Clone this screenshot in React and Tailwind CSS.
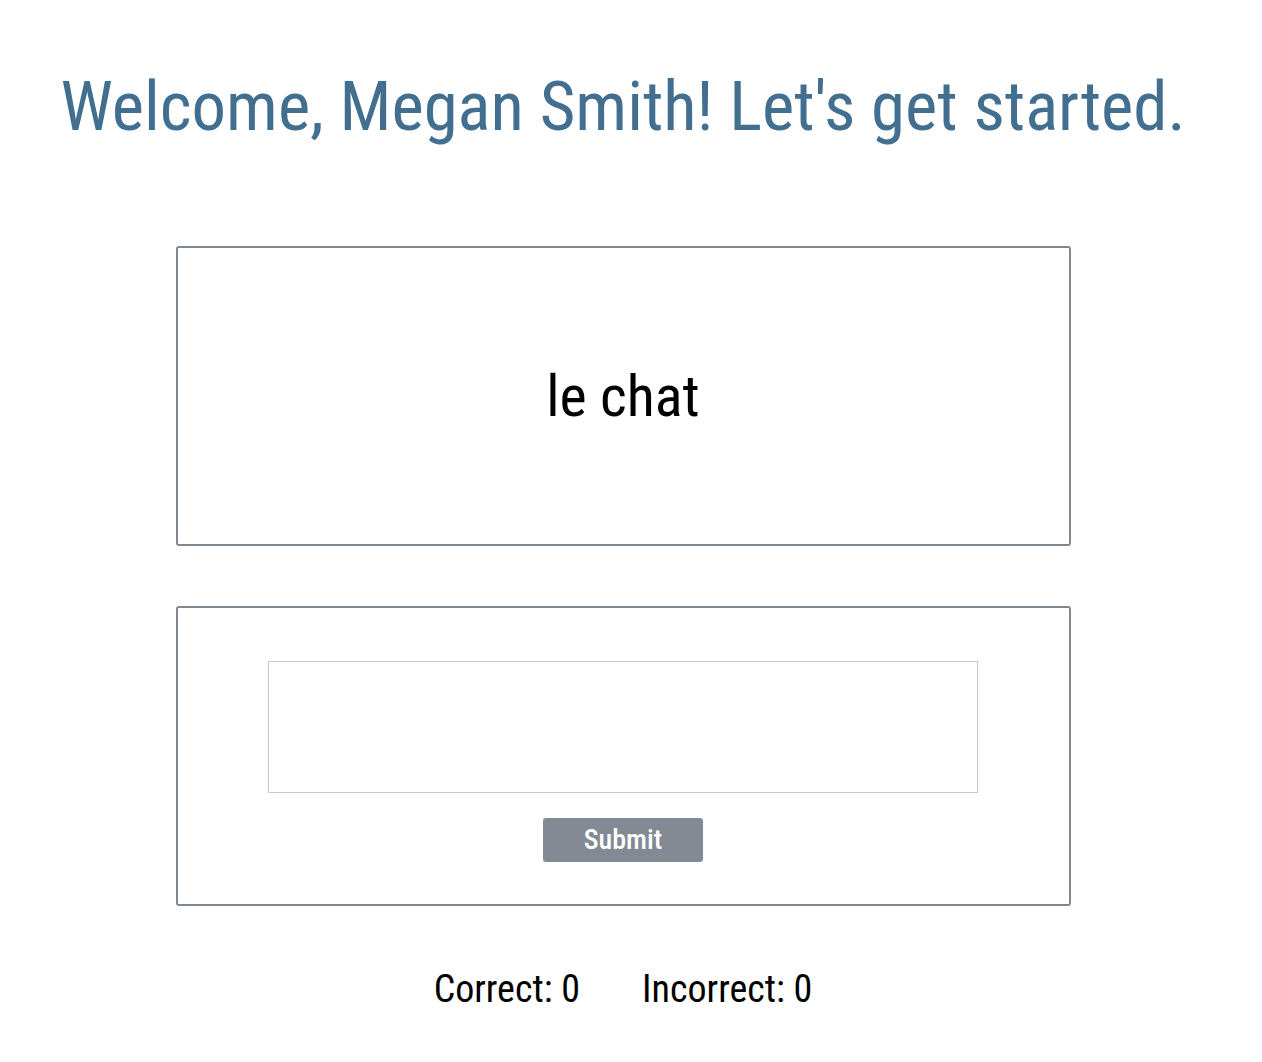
export default function App() {
  return (
    <div className="w-[1246px] bg-white pt-[62px] pb-10 text-black [font-family:'Roboto_Condensed',Roboto,sans-serif] [font-stretch:condensed]">
      <h1 className="text-center text-[68.8px] leading-[90px] text-[#426e8f]">
        Welcome, Megan Smith! Let's get started.
      </h1>

      <div className="mx-auto mt-[94px] flex h-[300px] w-[895px] items-center justify-center rounded-[3px] border-2 border-[#7f8790]">
        <span className="text-[58px]">le chat</span>
      </div>

      <div className="mx-auto mt-[60px] flex h-[300px] w-[895px] flex-col items-center rounded-[3px] border-2 border-[#7f8790] pt-[53px]">
        <input type="text" className="h-[132px] w-[710px] border border-[#c8c8c8] outline-none" />
        <button className="mt-[25px] h-[44px] w-[160px] rounded-[3px] bg-[#838a94] text-[28px] font-medium text-white">
          Submit
        </button>
      </div>

      <div className="mt-[64px] flex justify-center gap-[62px] text-[38px] leading-none">
        <span>Correct: 0</span>
        <span>Incorrect: 0</span>
      </div>
    </div>
  )
}
